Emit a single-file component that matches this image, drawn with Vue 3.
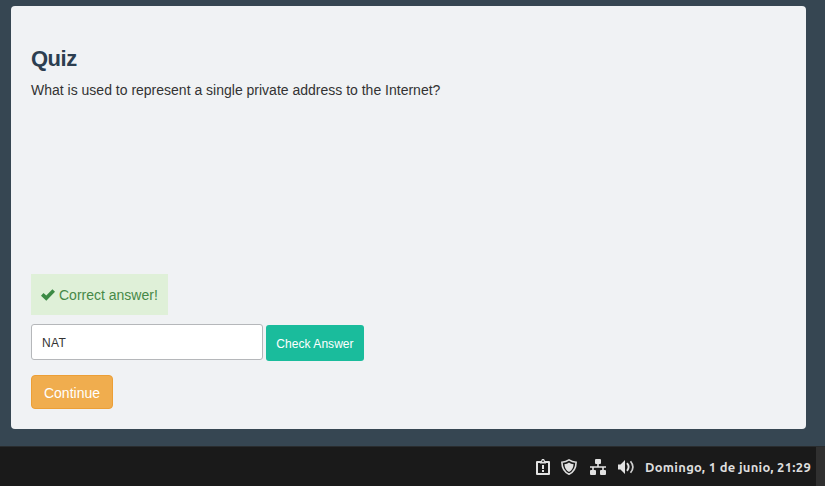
<script setup>
import { ref } from 'vue'

const answer = ref('NAT')
</script>

<template>
  <div class="desktop">
    <main class="page">
      <section class="card">
        <h1>Quiz</h1>
        <p class="question">What is used to represent a single private address to the Internet?</p>
        <div class="feedback">
          <svg class="check" viewBox="0 0 14 12" width="14" height="12">
            <path d="M0 6.700 2.500 4.100 5.300 6.500 11.400 .3 14 2.800 5.300 11.800Z" fill="#3c8a45" />
          </svg>
          <span>Correct answer!</span>
        </div>
        <div class="answer-row">
          <input v-model="answer" type="text" spellcheck="false" />
          <button class="verify" type="button">Check Answer</button>
        </div>
        <button class="continue" type="button">Continue</button>
      </section>
    </main>
    <footer class="panel">
      <div class="tray">
        <svg class="clipboard" width="14" height="16" viewBox="0 0 14 16">
          <path d="M1 3h12v12H1z" fill="none" stroke="#e2e2e2" stroke-width="2" stroke-linejoin="round" />
          <path d="M4 2h1L6 0h2l1 2h1v2.500H4z" fill="#e2e2e2" />
          <path d="M6.300 1.500h1.400v1.400H6.300z" fill="#1a1a1a" />
          <path d="M6 6h2v4H6zM6 11h2v2H6z" fill="#e2e2e2" />
        </svg>
        <svg class="shield" width="16" height="16" viewBox="0 0 16 16">
          <path d="M8 .9C6 2.200 3.500 3 .9 3.200c.1 6 2 9.700 7.100 12 5.100-2.300 7-6 7.100-12C12.500 3 10 2.200 8 .9z" fill="none" stroke="#dcdcdc" stroke-width="1.600" />
          <path d="M8 3.500C6.500 4.500 5.200 5 3.400 5.200c.3 3.900 1.800 6.400 4.600 7.800 2.800-1.400 4.300-3.900 4.600-7.800C10.800 5 9.500 4.500 8 3.500z" fill="#e2e2e2" />
        </svg>
        <svg class="network" width="16" height="16" viewBox="0 0 16 16">
          <g fill="#e2e2e2">
            <rect x="5" y="0" width="6" height="5" rx="1" />
            <rect x="0" y="11" width="6" height="5" rx="1" />
            <rect x="10" y="11" width="6" height="5" rx="1" />
            <path d="M7.200 5h1.600v2.200H16v1.600h-2.200V11h-1.600V8.800H3.800V11H2.200V8.800H0V7.200h7.200z" />
          </g>
        </svg>
        <svg class="volume" width="17" height="14" viewBox="0 0 17 14">
          <path d="M0 4.500h2.500L7 0v14L2.500 9.500H0z" fill="#e2e2e2" />
          <path d="M9 3.200q3.200 3.800 0 7.600" fill="none" stroke="#e2e2e2" stroke-width="1.900" />
          <path d="M12.500 1.200q4.800 5.800 0 11.600" fill="none" stroke="#d0d0d0" stroke-width="1.700" />
        </svg>
      </div>
      <time>Domingo, 1 de junio, 21:29</time>
      <div class="corner"></div>
    </footer>
  </div>
</template>

<style>
body {
  margin: 0;
}
</style>

<style scoped>
.desktop {
  width: 825px;
  height: 486px;
  display: flex;
  flex-direction: column;
  overflow: hidden;
  background: #364652;
  font-family: "Liberation Sans", Arial, sans-serif;
}
.page {
  box-sizing: border-box;
  height: 446px;
  padding: 6px 19px 17px 11px;
}
.card {
  box-sizing: border-box;
  height: 423px;
  padding: 40px 20px 20px;
  border-radius: 4px;
  background: #f0f2f4;
  display: flex;
  flex-direction: column;
  align-items: flex-start;
}
h1 {
  margin: 0;
  font-size: 22px;
  line-height: 26px;
  letter-spacing: -0.5px;
  color: #2c3e50;
}
.question {
  margin: 8px 0 0;
  font-size: 14px;
  line-height: 20px;
  color: #333;
  white-space: nowrap;
}
.feedback {
  box-sizing: border-box;
  width: 137px;
  height: 41px;
  margin-top: 174px;
  padding: 0 10px;
  display: flex;
  align-items: center;
  gap: 4px;
  background: #dff0d8;
  color: #468847;
  font-size: 14px;
  white-space: nowrap;
}
.check {
  flex: none;
}
.answer-row {
  display: flex;
  gap: 3px;
  margin-top: 9px;
}
input {
  box-sizing: border-box;
  width: 232px;
  height: 36px;
  padding: 2px 10px 0;
  border: 1px solid #b5b7ba;
  border-radius: 3px;
  background: #fff;
  color: #333;
  font: 12px "Liberation Sans", Arial, sans-serif;
  letter-spacing: 0.4px;
  outline: none;
}
button {
  box-sizing: border-box;
  padding: 2px 0 0;
  color: #fff;
  font-family: inherit;
  white-space: nowrap;
}
.verify {
  width: 98px;
  height: 36px;
  margin-top: 1px;
  border: 0;
  border-radius: 3px;
  background: #1abc9c;
  font-size: 12px;
  letter-spacing: 0.05px;
}
.continue {
  width: 82px;
  height: 34px;
  margin-top: 14px;
  border: 1px solid #ec9f36;
  border-radius: 4px;
  background: #f0ad4e;
  font-size: 14px;
}
.panel {
  box-sizing: border-box;
  height: 40px;
  display: flex;
  align-items: center;
  justify-content: flex-end;
  border-top: 1px solid #292c2e;
  background: #1a1a1a;
}
.tray {
  display: flex;
  align-items: center;
  margin-right: 10px;
}
.shield {
  margin-left: 11px;
}
.network {
  margin-left: 13px;
}
.volume {
  margin-left: 12px;
}
time {
  width: 166px;
  margin-right: 5px;
  color: #dedede;
  font-family: Ubuntu, "Noto Sans", sans-serif;
  font-size: 13px;
  font-weight: 600;
  letter-spacing: 0.28px;
  white-space: nowrap;
}
.corner {
  width: 9px;
  height: 39px;
  background: #303030;
}
</style>
